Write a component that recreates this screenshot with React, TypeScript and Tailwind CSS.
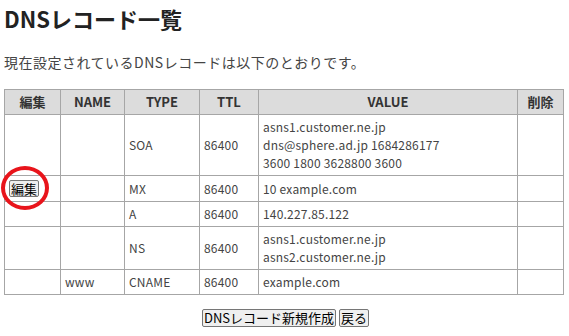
import React from 'react';

type DnsRecord = {
    name: string;
    type: string;
    ttl: number;
    value: string[];
    editable?: boolean;
    height: string;
};

const records: DnsRecord[] = [
    {
        name: '',
        type: 'SOA',
        ttl: 86400,
        value: [
            'asns1.customer.ne.jp',
            'dns@sphere.ad.jp 1684286177',
            '3600 1800 3628800 3600',
        ],
        height: 'h-[61px]',
    },
    { name: '', type: 'MX', ttl: 86400, value: ['10 example.com'], editable: true, height: 'h-[26px]' },
    { name: '', type: 'A', ttl: 86400, value: ['140.227.85.122'], height: 'h-[25px]' },
    {
        name: '',
        type: 'NS',
        ttl: 86400,
        value: ['asns1.customer.ne.jp', 'asns2.customer.ne.jp'],
        height: 'h-[43px]',
    },
    { name: 'www', type: 'CNAME', ttl: 86400, value: ['example.com'], height: 'h-[25px]' },
];

const cell = 'border border-[#a6a6a6] px-[4px] align-middle';
const btn =
    'rounded-[2px] border border-[#767676] bg-[#efefef] px-[1px] text-[13px] leading-[15px] text-black';

export default function App() {
    return (
        <div
            className="min-h-[336px] bg-white px-[4px] pt-[5px] text-[#444]"
            style={{ fontFamily: '"Noto Sans CJK JP", "Noto Sans", sans-serif' }}
        >
            <h1 className="text-[22px] leading-[27px] font-bold text-[#222]">DNSレコード一覧</h1>
            <p className="mt-[21px] text-[14px] leading-[18px] tracking-[0.5px]">
                現在設定されているDNSレコードは以下のとおりです。
            </p>

            <table className="mt-[18px] w-[559px] table-fixed border-collapse text-[12px] leading-[18px] tracking-[0.2px]">
                <colgroup>
                    <col className="w-[56px]" />
                    <col className="w-[64px]" />
                    <col className="w-[75px]" />
                    <col className="w-[59px]" />
                    <col className="w-[259px]" />
                    <col className="w-[46px]" />
                </colgroup>
                <thead>
                    <tr className="h-[25px] bg-[#dcdcdc] text-[13px] font-bold tracking-normal text-[#333]">
                        <th className={cell}>編集</th>
                        <th className={cell}>NAME</th>
                        <th className={cell}>TYPE</th>
                        <th className={cell}>TTL</th>
                        <th className={cell}>VALUE</th>
                        <th className={cell}>削除</th>
                    </tr>
                </thead>
                <tbody>
                    {records.map((r) => (
                        <tr key={r.type} className={r.height}>
                            <td className={`${cell} relative`}>
                                {r.editable && (
                                    <>
                                        <button className={`${btn} tracking-normal`}>編集</button>
                                        <span className="absolute top-[-10px] left-[-4px] h-[44px] w-[48px] rounded-[50%] border-[4px] border-[#e8141b]" />
                                    </>
                                )}
                            </td>
                            <td className={cell}>{r.name}</td>
                            <td className={cell}>{r.type}</td>
                            <td className={cell}>{r.ttl}</td>
                            <td className={cell}>
                                {r.value.map((v) => (
                                    <div key={v}>{v}</div>
                                ))}
                            </td>
                            <td className={cell}></td>
                        </tr>
                    ))}
                </tbody>
            </table>

            <div className="mt-[14px] flex justify-center gap-[3px] pl-[2px]">
                <button className={`${btn} leading-[16px]`}>DNSレコード新規作成</button>
                <button className={`${btn} leading-[16px]`}>戻る</button>
            </div>
        </div>
    );
}
